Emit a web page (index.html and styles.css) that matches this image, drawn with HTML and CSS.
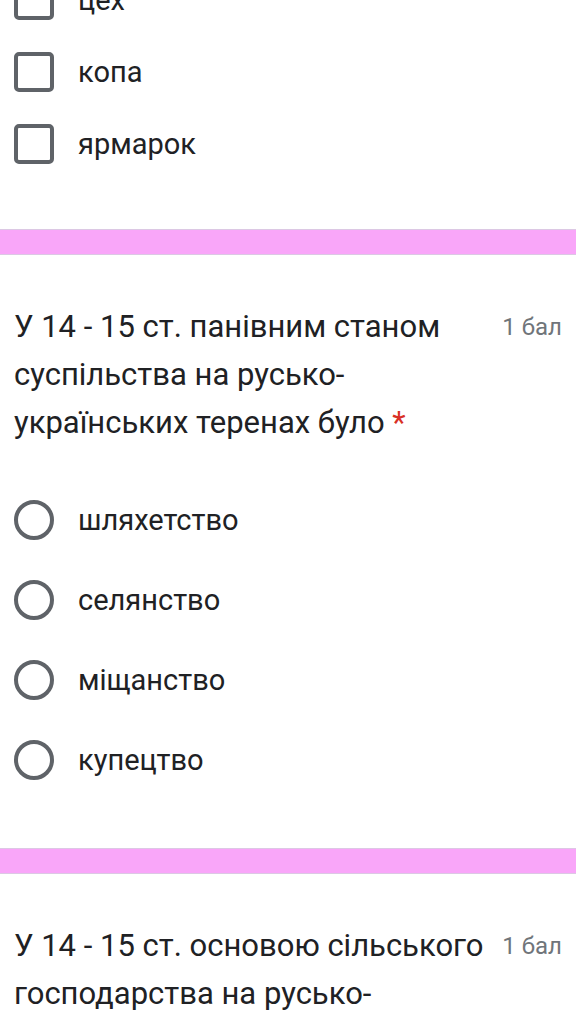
FILE: index.html
```html
<!DOCTYPE html>
<html lang="uk">
<head>
<meta charset="utf-8">
<link rel="stylesheet" href="styles.css">
</head>
<body>
<div class="page">
  <ul class="options options-check">
    <li class="option"><span class="checkbox"></span><span class="label">цех</span></li>
    <li class="option"><span class="checkbox"></span><span class="label">копа</span></li>
    <li class="option"><span class="checkbox"></span><span class="label">ярмарок</span></li>
  </ul>

  <div class="band"></div>

  <section class="question">
    <div class="q-head">
      <h2 class="q-title">У 14 - 15 ст. панівним станом суспільства на русько-українських теренах було <span class="req">*</span></h2>
      <span class="points">1 бал</span>
    </div>
    <ul class="options options-radio">
      <li class="option"><span class="radio"></span><span class="label">шляхетство</span></li>
      <li class="option"><span class="radio"></span><span class="label">селянство</span></li>
      <li class="option"><span class="radio"></span><span class="label">міщанство</span></li>
      <li class="option"><span class="radio"></span><span class="label">купецтво</span></li>
    </ul>
  </section>

  <div class="band band-2"></div>

  <section class="question">
    <div class="q-head">
      <h2 class="q-title">У 14 - 15 ст. основою сільського господарства на русько-українських теренах було <span class="req">*</span></h2>
      <span class="points">1 бал</span>
    </div>
  </section>
</div>
</body>
</html>
```

FILE: styles.css
```css
html, body {
  margin: 0;
  padding: 0;
  background: #ffffff;
}
body {
  font-family: Roboto, "Noto Sans", sans-serif;
  color: #202124;
  overflow: hidden;
}
.page {
  width: 576px;
  height: 1024px;
  overflow: hidden;
}
.options {
  list-style: none;
  margin: 0;
  padding: 0 14px;
}
.options-check {
  margin-top: -36px;
}
.options-check .option {
  height: 72px;
}
.options-radio .option {
  height: 80px;
}
.option {
  display: flex;
  align-items: center;
}
.checkbox {
  box-sizing: border-box;
  width: 40px;
  height: 40px;
  border: 4px solid #5f6368;
  border-radius: 5px;
  flex: none;
}
.radio {
  box-sizing: border-box;
  width: 40px;
  height: 40px;
  border: 4px solid #5f6368;
  border-radius: 50%;
  flex: none;
}
.label {
  margin-left: 24px;
  font-size: 29px;
  color: #202124;
}
.band {
  margin-top: 49px;
  height: 26px;
  box-sizing: border-box;
  background: #f9a6f9;
  border-top: 1px solid #dcc8e4;
  border-bottom: 1px solid #dcc8e4;
}
.band-2 {
  margin-top: 48px;
}
.question {
  padding: 0 14px;
}
.q-head {
  display: flex;
  align-items: flex-start;
  padding-top: 48px;
}
.q-title {
  flex: 1;
  margin: 0;
  font-weight: 400;
  font-size: 31px;
  line-height: 48px;
  color: #202124;
}
.req {
  color: #d93025;
}
.points {
  flex: none;
  margin-left: 10px;
  font-size: 24px;
  line-height: 48px;
  color: #70757a;
}
.options-radio {
  padding: 0;
  margin-top: 33px;
}
```
